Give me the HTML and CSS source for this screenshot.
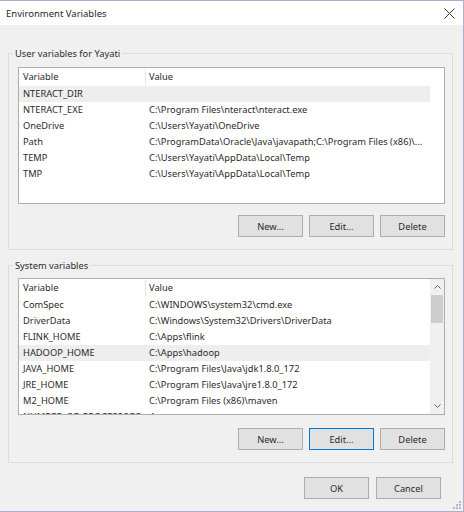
FILE: index.html
```html
<!DOCTYPE html>
<html>
<head>
<meta charset="utf-8">
<title>Environment Variables</title>
<link rel="stylesheet" href="styles.css">
</head>
<body>
<div class="window">
  <div class="titlebar">
    <span class="title">Environment Variables</span>
    <svg class="close" width="11" height="11" viewBox="0 0 11 11"><path d="M0.5 0.5L10.5 10.5M10.5 0.5L0.5 10.5" stroke="#3a3a3a" stroke-width="1" fill="none"/></svg>
  </div>
  <div class="content">
    <section class="group first">
      <span class="legend">User variables for Yayati</span>
      <div class="list">
        <div class="rows">
          <div class="row head"><span class="c1">Variable</span><span class="c2">Value</span></div>
          <div class="row sel"><span class="c1">NTERACT_DIR</span><span class="c2"></span></div>
          <div class="row"><span class="c1">NTERACT_EXE</span><span class="c2">C:\Program Files\nteract\nteract.exe</span></div>
          <div class="row"><span class="c1">OneDrive</span><span class="c2">C:\Users\Yayati\OneDrive</span></div>
          <div class="row"><span class="c1">Path</span><span class="c2">C:\ProgramData\Oracle\Java\javapath;C:\Program Files (x86)\...</span></div>
          <div class="row"><span class="c1">TEMP</span><span class="c2">C:\Users\Yayati\AppData\Local\Temp</span></div>
          <div class="row"><span class="c1">TMP</span><span class="c2">C:\Users\Yayati\AppData\Local\Temp</span></div>
        </div>
      </div>
      <div class="buttons">
        <button class="btn">New...</button>
        <button class="btn">Edit...</button>
        <button class="btn">Delete</button>
      </div>
    </section>
    <section class="group second">
      <span class="legend">System variables</span>
      <div class="list">
        <div class="rows">
          <div class="row head"><span class="c1">Variable</span><span class="c2">Value</span></div>
          <div class="row"><span class="c1">ComSpec</span><span class="c2">C:\WINDOWS\system32\cmd.exe</span></div>
          <div class="row"><span class="c1">DriverData</span><span class="c2">C:\Windows\System32\Drivers\DriverData</span></div>
          <div class="row"><span class="c1">FLINK_HOME</span><span class="c2">C:\Apps\flink</span></div>
          <div class="row sel"><span class="c1">HADOOP_HOME</span><span class="c2">C:\Apps\hadoop</span></div>
          <div class="row"><span class="c1">JAVA_HOME</span><span class="c2">C:\Program Files\Java\jdk1.8.0_172</span></div>
          <div class="row"><span class="c1">JRE_HOME</span><span class="c2">C:\Program Files\Java\jre1.8.0_172</span></div>
          <div class="row"><span class="c1">M2_HOME</span><span class="c2">C:\Program Files (x86)\maven</span></div>
          <div class="row"><span class="c1">NUMBER_OF_PROCESSORS</span><span class="c2">4</span></div>
        </div>
        <div class="scrollbar">
          <div class="arrow"><svg width="7" height="4" viewBox="0 0 7 4"><path d="M0.5 3.5L3.5 0.5L6.5 3.5" stroke="#606060" fill="none"/></svg></div>
          <div class="track"><div class="thumb"></div></div>
          <div class="arrow"><svg width="7" height="4" viewBox="0 0 7 4"><path d="M0.5 0.5L3.5 3.5L6.5 0.5" stroke="#606060" fill="none"/></svg></div>
        </div>
      </div>
      <div class="buttons">
        <button class="btn">New...</button>
        <button class="btn focus">Edit...</button>
        <button class="btn">Delete</button>
      </div>
    </section>
    <div class="footer">
      <button class="btn">OK</button>
      <button class="btn">Cancel</button>
    </div>
  </div>
  <svg class="grip" width="8" height="8" viewBox="0 0 8 8">
    <rect x="6" y="0" width="2" height="2" fill="#b8b8b8"/>
    <rect x="6" y="3" width="2" height="2" fill="#b8b8b8"/>
    <rect x="3" y="3" width="2" height="2" fill="#b8b8b8"/>
    <rect x="6" y="6" width="2" height="2" fill="#b8b8b8"/>
    <rect x="3" y="6" width="2" height="2" fill="#b8b8b8"/>
    <rect x="0" y="6" width="2" height="2" fill="#b8b8b8"/>
  </svg>
</div>
</body>
</html>
```

FILE: styles.css
```css
html, body {
  margin: 0;
  padding: 0;
  background: #f0f0f0;
}
body {
  font-family: "Noto Sans", "Open Sans", sans-serif;
  font-size: 9.3px;
  color: #2a2a2a;
}
.window {
  position: relative;
  width: 464px;
  height: 512px;
  box-sizing: border-box;
  border: 1px solid #b9a9d0;
  border-left: none;
  background: #f0f0f0;
  display: flex;
  flex-direction: column;
}
.titlebar {
  height: 24px;
  background: #fff;
  display: flex;
  align-items: center;
  justify-content: space-between;
  padding: 0 8px 0 6px;
  flex: none;
}
.title {
  font-size: 9.5px;
  color: #1f1f1f;
}
.content {
  padding: 0 10px 0 8px;
  display: flex;
  flex-direction: column;
}
.group {
  position: relative;
  border: 1px solid #dcdcdc;
  padding: 13px 7px 12px 9px;
}
.group.first {
  margin-top: 28px;
}
.group.second {
  margin-top: 15px;
  padding-top: 12px;
}
.legend {
  position: absolute;
  top: -8px;
  left: 4px;
  padding: 0 2px;
  line-height: 15px;
  background: #f0f0f0;
}
.list {
  height: 137px;
  box-sizing: border-box;
  border: 1px solid #adadad;
  background: #fff;
  display: flex;
  overflow: hidden;
}
.rows {
  width: 411px;
  flex: none;
  overflow: hidden;
}
.row {
  height: 16px;
  display: flex;
  align-items: center;
  white-space: nowrap;
  line-height: 16px;
}
.row.head {
  height: 18px;
}
.row.sel {
  background: #eeeeee;
}
.c1 {
  width: 127px;
  flex: none;
  box-sizing: border-box;
  padding-left: 4px;
  border-right: 1px solid transparent;
  overflow: hidden;
}
.row.head .c1 {
  border-right-color: #e5e5e5;
}
.c2 {
  flex: 1;
  padding-left: 3px;
  overflow: hidden;
}
.scrollbar {
  width: 14px;
  flex: none;
  background: #f0f0f0;
  display: flex;
  flex-direction: column;
}
.arrow {
  height: 16px;
  display: flex;
  align-items: center;
  justify-content: center;
  flex: none;
}
.track {
  flex: 1;
}
.thumb {
  height: 28px;
  margin: 0 1px;
  background: #cdcdcd;
}
.buttons {
  display: flex;
  justify-content: flex-end;
  gap: 6px;
  margin-top: 11px;
}
.group.second .buttons {
  margin-top: 13px;
}
.btn {
  width: 65px;
  height: 22px;
  box-sizing: border-box;
  border: 1px solid #adadad;
  background: #e1e1e1;
  font-family: "Noto Sans", "Open Sans", sans-serif;
  font-size: 9.3px;
  color: #2a2a2a;
  padding: 0;
  margin: 0;
}
.btn.focus {
  border-color: #0078d7;
}
.footer {
  display: flex;
  justify-content: flex-end;
  gap: 7px;
  margin-top: 14px;
  padding-right: 12px;
}
.grip {
  position: absolute;
  right: 2px;
  bottom: 2px;
}
```
